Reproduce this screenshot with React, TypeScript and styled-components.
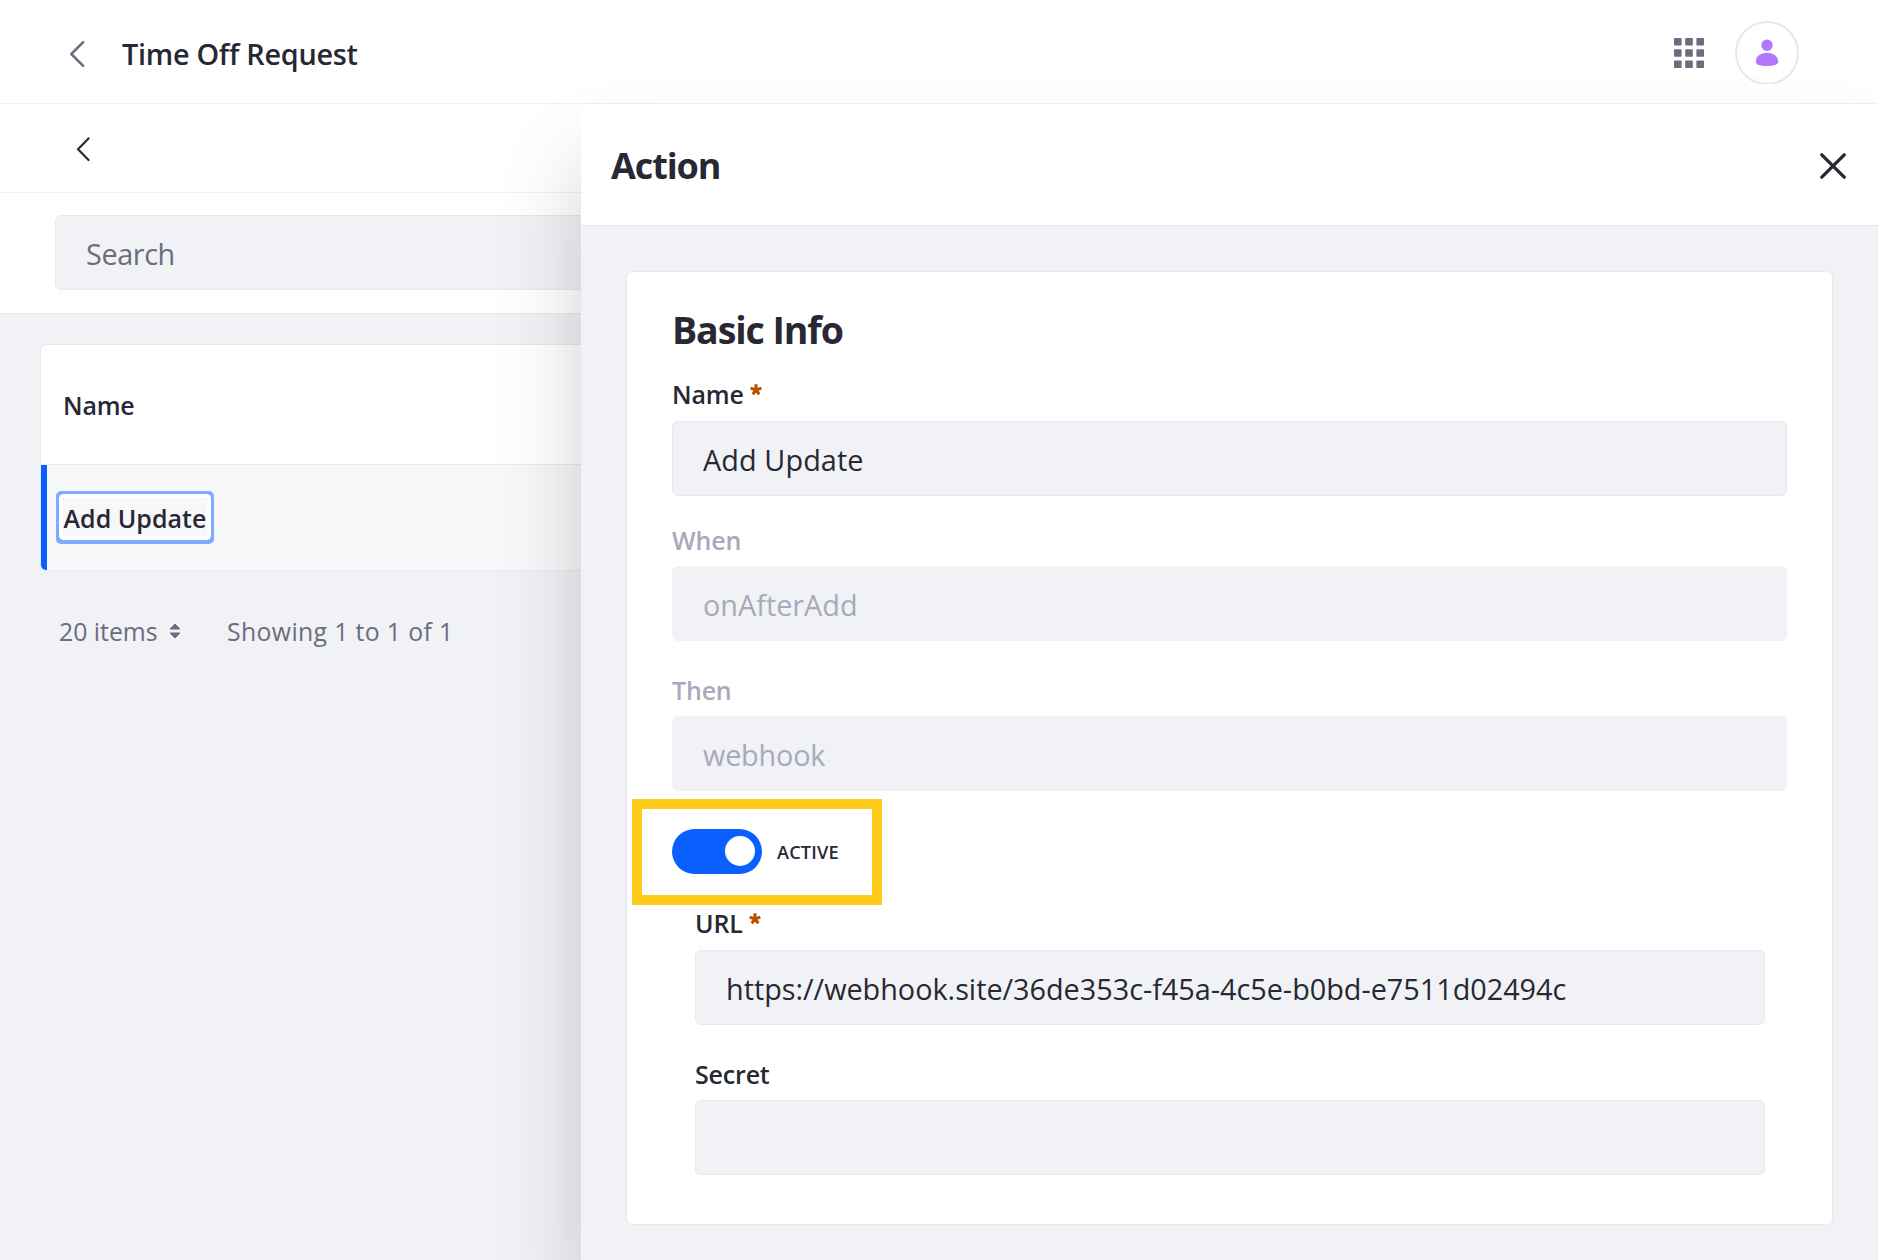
import React from 'react';
import styled, { createGlobalStyle } from 'styled-components';

const c = {
  text: '#272833',
  muted: '#6b6c7e',
  disabled: '#a7a9bc',
  surface: '#f1f2f5',
  border: '#e7e7ed',
  primary: '#0b5fff',
  focus: '#80acff',
  required: '#b95000',
  highlight: '#ffcb1a',
  avatar: '#af78ff',
};

const GlobalStyle = createGlobalStyle`
  *, *::before, *::after { box-sizing: border-box; }
  body {
    margin: 0;
    overflow: hidden;
    background: ${c.surface};
    color: ${c.text};
    font-family: "Open Sans", "Noto Sans", sans-serif;
  }
  svg { display: block; flex: none; }
`;

const Page = styled.div`
  position: relative;
  display: flex;
  flex-direction: column;
  width: 1878px;
  height: 1260px;
  overflow: hidden;
`;

const IconButton = styled.button`
  display: flex;
  padding: 0;
  border: 0;
  background: none;
  color: inherit;
`;

const ControlMenu = styled.header`
  display: flex;
  align-items: center;
  height: 104px;
  padding: 4px 79px 0 69px;
  background: #fff;
  border-bottom: 1px solid #f0f0f3;
  color: ${c.muted};
`;

const PageTitle = styled.h1`
  flex: 1;
  margin: 0 0 0 37px;
  color: ${c.text};
  font-size: 28.8px;
  font-weight: 600;
  line-height: 40px;
  letter-spacing: -0.28px;
`;

const HeaderActions = styled.div`
  display: flex;
  align-items: center;
  gap: 31px;
  margin-bottom: 2px;
`;

const UserCrop = styled.div`
  height: 63px;
  overflow: hidden;
`;

const Avatar = styled.div`
  display: flex;
  align-items: center;
  justify-content: center;
  width: 64px;
  height: 64px;
  border: 2px solid ${c.border};
  border-radius: 50%;
  background: #fff;
`;

const SubHeader = styled.div`
  display: flex;
  align-items: center;
  height: 89px;
  padding: 2px 0 0 76px;
  background: #fff;
  border-bottom: 1px solid ${c.surface};
`;

const ManagementBar = styled.div`
  height: 121px;
  padding: 22px 55px;
  background: #fff;
  border-bottom: 1px solid ${c.border};
`;

const Input = styled.input<{ $tracking?: number }>`
  display: block;
  width: 100%;
  height: 75px;
  padding: 2px 30px 0;
  border: 1px solid ${c.border};
  border-radius: 6px;
  outline: 0;
  background: ${c.surface};
  color: ${c.text};
  font-family: inherit;
  font-size: 28.8px;
  letter-spacing: ${(p) => p.$tracking ?? 0}px;
  &::placeholder { color: ${c.muted}; opacity: 1; }
  &:disabled { border-color: ${c.surface}; color: ${c.disabled}; }
`;

const Table = styled.section`
  margin: 30px 40px 0;
  border: 1px solid ${c.border};
  border-radius: 6px;
  overflow: hidden;
  background: #fff;
`;

const HeadRow = styled.div`
  display: flex;
  align-items: center;
  height: 120px;
  padding: 1px 0 0 22px;
  border-bottom: 1px solid ${c.border};
  font-size: 25px;
  font-weight: 600;
  letter-spacing: -0.2px;
`;

const ActiveRow = styled.div`
  display: flex;
  align-items: flex-start;
  height: 105px;
  padding: 33px 0 0 16px;
  border-left: 6px solid ${c.primary};
  background: #f7f8fa;
`;

const RowLink = styled.a`
  height: 38px;
  padding: 0 0.5px;
  border-radius: 1.5px;
  box-shadow: 0 0 0 4px #fff, 0 0 0 7px ${c.focus}, 0 1px 0 7px ${c.focus};
  color: ${c.text};
  font-size: 25px;
  font-weight: 600;
  line-height: 41px;
  letter-spacing: 0.03px;
`;

const Pagination = styled.div`
  display: flex;
  align-items: center;
  height: 34px;
  margin: 43px 0 0 59px;
  color: ${c.muted};
  font-size: 24.8px;
`;

const PageSize = styled.div`
  display: flex;
  align-items: center;
  gap: 11px;
  width: 168px;
`;

const Results = styled.span`
  letter-spacing: 0.36px;
`;

const SidePanel = styled.aside`
  position: absolute;
  top: 104px;
  right: 0;
  bottom: 0;
  left: 581px;
  display: flex;
  flex-direction: column;
  background: ${c.surface};
  box-shadow: 0 58px 82px rgba(0, 0, 0, 0.18);
`;

const PanelHeader = styled.div`
  display: flex;
  align-items: center;
  justify-content: space-between;
  height: 122px;
  padding: 2px 32px 0 30px;
  background: #fff;
  border-bottom: 1px solid ${c.border};
`;

const PanelTitle = styled.h2`
  margin: 0;
  font-size: 36px;
  font-weight: 700;
  line-height: 45px;
  letter-spacing: -1.1px;
`;

const Card = styled.form`
  display: flex;
  flex-direction: column;
  height: 954px;
  margin: 45px 45px 0;
  padding: 35px 45px 0;
  background: #fff;
  border: 1px solid ${c.border};
  border-radius: 7px;
`;

const SectionTitle = styled.h3`
  margin: 0 0 27px;
  font-size: 37.5px;
  font-weight: 700;
  line-height: 45px;
  letter-spacing: -1.08px;
`;

const FieldGroup = styled.div<{ $before?: number }>`
  margin-top: ${(p) => p.$before ?? 34}px;
`;

const Label = styled.label<{ $disabled?: boolean; $required?: boolean }>`
  display: flex;
  gap: 7px;
  margin-bottom: ${(p) => (p.$required ? 12 : 11)}px;
  color: ${(p) => (p.$disabled ? c.disabled : c.text)};
  font-size: 25px;
  font-weight: 600;
  line-height: 30px;
  letter-spacing: -0.18px;
  svg { margin: 5px 0 0 -0.5px; }
`;

const Parameters = styled.div`
  padding: 0 22px 0 23px;
`;

const ToggleHighlight = styled.div`
  display: flex;
  align-items: flex-start;
  width: 250px;
  height: 106px;
  margin: 8px 0 -31px -40px;
  padding: 20px 0 0 30px;
  border: 10px solid ${c.highlight};
`;

const Toggle = styled.button`
  width: 90px;
  height: 45px;
  padding: 7px;
  display: flex;
  justify-content: flex-end;
  border: 0;
  border-radius: 23px;
  background: ${c.primary};
`;

const Thumb = styled.span`
  width: 30px;
  height: 30px;
  border-radius: 50%;
  background: #fff;
`;

const ToggleLabel = styled.span`
  margin-left: 15px;
  font-size: 18.2px;
  font-weight: 600;
  line-height: 46px;
  letter-spacing: 0.15px;
`;

const Asterisk = () => (
  <svg width="12" height="12" viewBox="0 0 12 12" fill="none" stroke={c.required} strokeWidth="3">
    <path d="M6 6V0.200M6 6L0.600 4.200M6 6L11.400 4.200M6 5.600L2.800 10.300M6 5.600L9.200 10.300" />
  </svg>
);

interface FieldProps {
  label: string;
  value: string;
  required?: boolean;
  disabled?: boolean;
  before?: number;
  tracking?: number;
}

const Field = ({ label, value, required, disabled, before, tracking }: FieldProps) => (
  <FieldGroup $before={before}>
    <Label $disabled={disabled} $required={required}>
      {label}
      {required && <Asterisk />}
    </Label>
    <Input defaultValue={value} disabled={disabled} $tracking={tracking} />
  </FieldGroup>
);

const gridStops = [0, 11.2, 22.4];

export default function App() {
  return (
    <>
      <GlobalStyle />
      <Page>
        <ControlMenu>
          <IconButton aria-label="Back">
            <svg width="16" height="28" viewBox="0 0 16 28" fill="none" stroke="currentColor" strokeWidth="2.5" strokeLinecap="round" strokeLinejoin="round">
              <path d="M14.2 2.2L2.3 14L14.2 25.8" />
            </svg>
          </IconButton>
          <PageTitle>Time Off Request</PageTitle>
          <HeaderActions>
            <IconButton aria-label="Applications">
              <svg width="30" height="30" viewBox="0 0 30 30" fill="currentColor">
                {gridStops.map((y) =>
                  gridStops.map((x) => <rect key={`${x}-${y}`} x={x} y={y} width="7.6" height="7.6" rx="0.8" />)
                )}
              </svg>
            </IconButton>
            <UserCrop>
              <Avatar>
                <svg width="24" height="28" viewBox="0 0 24 28" fill={c.avatar}>
                  <circle cx="12" cy="6.3" r="5.7" />
                  <path d="M12 13.7c6.4 0 11.2 4 11.2 8.6 0 3.4-3.6 4.7-11.2 4.7S.8 25.7.8 22.3c0-4.6 4.8-8.6 11.2-8.6z" />
                </svg>
              </Avatar>
            </UserCrop>
          </HeaderActions>
        </ControlMenu>
        <SubHeader>
          <IconButton aria-label="Back to list">
            <svg width="14" height="26" viewBox="0 0 14 26" fill="none" stroke="currentColor" strokeWidth="2.2" strokeLinecap="round" strokeLinejoin="round">
              <path d="M12.5 2.4L2 13.2L12.5 24" />
            </svg>
          </IconButton>
        </SubHeader>
        <ManagementBar>
          <Input placeholder="Search" $tracking={-0.4} />
        </ManagementBar>
        <Table>
          <HeadRow>Name</HeadRow>
          <ActiveRow>
            <RowLink>Add Update</RowLink>
          </ActiveRow>
        </Table>
        <Pagination>
          <PageSize>
            20 items
            <svg width="12" height="16" viewBox="0 0 12 16" fill={c.muted} stroke={c.muted} strokeLinejoin="round">
              <path d="M6 1L11 6H1zM6 15L1 10H11z" />
            </svg>
          </PageSize>
          <Results>Showing 1 to 1 of 1</Results>
        </Pagination>
        <SidePanel>
          <PanelHeader>
            <PanelTitle>Action</PanelTitle>
            <IconButton aria-label="Close">
              <svg width="26" height="26" viewBox="0 0 26 26" fill="none" stroke={c.text} strokeWidth="3.3" strokeLinecap="round">
                <path d="M1.8 1.8L24.2 24.2M24.2 1.8L1.8 24.2" />
              </svg>
            </IconButton>
          </PanelHeader>
          <Card>
            <SectionTitle>Basic Info</SectionTitle>
            <Field label="Name" value="Add Update" required before={0} tracking={0.1} />
            <Field label="When" value="onAfterAdd" disabled before={29} tracking={0} />
            <Field label="Then" value="webhook" disabled tracking={-0.18} />
            <ToggleHighlight>
              <Toggle type="button" role="switch" aria-checked="true">
                <Thumb />
              </Toggle>
              <ToggleLabel>ACTIVE</ToggleLabel>
            </ToggleHighlight>
            <Parameters>
              <Field
                label="URL"
                value="https://webhook.site/36de353c-f45a-4c5e-b0bd-e7511d02494c"
                required
                tracking={-0.01}
              />
              <Field label="Secret" value="" />
            </Parameters>
          </Card>
        </SidePanel>
      </Page>
    </>
  );
}
